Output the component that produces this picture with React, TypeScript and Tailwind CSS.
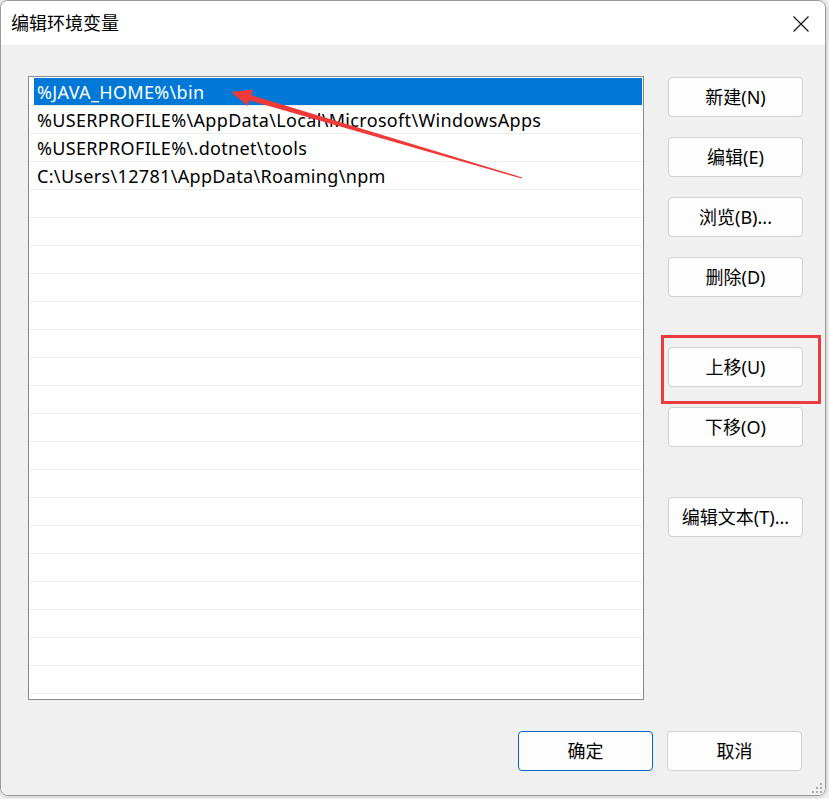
import React from "react";

const entries = [
  "%JAVA_HOME%\\bin",
  "%USERPROFILE%\\AppData\\Local\\Microsoft\\WindowsApps",
  "%USERPROFILE%\\.dotnet\\tools",
  "C:\\Users\\12781\\AppData\\Roaming\\npm",
];

const rows = Array.from({ length: 22 }, (_, i) => entries[i] ?? "");

function Btn({ label, primary = false }: { label: string; primary?: boolean }) {
  return (
    <button
      className={
        "w-[135px] h-[40px] shrink-0 rounded-[4px] border bg-[#fdfdfd] text-[18px] leading-none text-black flex items-center justify-center " +
        (primary ? "border-[#0067c0]" : "border-[#d0d0d0]")
      }
    >
      {label}
    </button>
  );
}

export default function App() {
  return (
    <div className="relative w-[829px] h-[799px] overflow-hidden bg-[#f2f2f2] font-['Noto_Sans','Noto_Sans_CJK_SC',sans-serif]">
      {/* the dialog window */}
      <div className="relative w-[826px] h-[796px] flex flex-col rounded-[8px] border border-[#9a9a9a] overflow-hidden shadow-[0_0_4px_rgba(0,0,0,0.25)]">
        {/* title bar */}
        <div className="h-[44px] shrink-0 bg-white flex items-center justify-between pl-[10px] pr-[15px]">
          <span className="text-[18px] leading-none text-black">编辑环境变量</span>
          <svg width="18" height="18" viewBox="0 0 18 18" className="mt-[2px]">
            <path d="M1.5 1.5 L16.5 16.5 M16.5 1.5 L1.5 16.5" stroke="#1a1a1a" strokeWidth="1.3" fill="none" />
          </svg>
        </div>

        {/* body */}
        <div className="flex-1 bg-[#f0f0f0] flex flex-col pl-[27px] pt-[31px]">
          <div className="flex">
            {/* list box */}
            <div className="w-[616px] h-[624px] shrink-0 border border-[#868a91] bg-white pt-[1px] px-[1px]">
              {rows.map((text, i) => (
                <div key={i} className="h-[28px] border-b border-[#ececec] flex">
                  <div
                    className={
                      "ml-[4px] flex-1 h-[27px] flex items-center pl-[3px] text-[18px] leading-none tracking-[0.33px] whitespace-nowrap " +
                      (i === 0 ? "bg-[#0078d7] text-white" : "text-black")
                    }
                  >
                    {text}
                  </div>
                </div>
              ))}
            </div>

            {/* side buttons */}
            <div className="ml-[24px] mt-[1px] flex flex-col">
              <Btn label="新建(N)" />
              <div className="h-[20px]" />
              <Btn label="编辑(E)" />
              <div className="h-[20px]" />
              <Btn label="浏览(B)..." />
              <div className="h-[20px]" />
              <Btn label="删除(D)" />
              <div className="h-[50px]" />
              <Btn label="上移(U)" />
              <div className="h-[20px]" />
              <Btn label="下移(O)" />
              <div className="h-[50px]" />
              <Btn label="编辑文本(T)..." />
            </div>
          </div>

          {/* bottom buttons */}
          <div className="mt-[31px] flex justify-end gap-[14px] pr-[23px]">
            <Btn label="确定" primary />
            <Btn label="取消" />
          </div>
        </div>

        {/* resize grip */}
        <svg width="12" height="12" viewBox="0 0 12 12" className="absolute right-[2px] bottom-[1px]">
          <g fill="#a8a8a8">
            <rect x="9" y="1" width="2" height="2" />
            <rect x="5" y="5" width="2" height="2" />
            <rect x="9" y="5" width="2" height="2" />
            <rect x="1" y="9" width="2" height="2" />
            <rect x="5" y="9" width="2" height="2" />
            <rect x="9" y="9" width="2" height="2" />
          </g>
        </svg>
      </div>

      {/* annotation: red box around move-up */}
      <div className="absolute left-[661px] top-[335px] w-[160px] h-[69px] border-[3px] border-[#ec3b3f]" />

      {/* annotation: red arrow */}
      <svg className="absolute left-0 top-0 pointer-events-none" width="829" height="799" viewBox="0 0 829 799">
        <polygon
          points="231,92 253,89.6 251.1,95.1 522.2,177.4 521.8,178.6 249.3,100.3 247.6,105.8"
          fill="#ef3a3a"
        />
      </svg>
    </div>
  );
}
